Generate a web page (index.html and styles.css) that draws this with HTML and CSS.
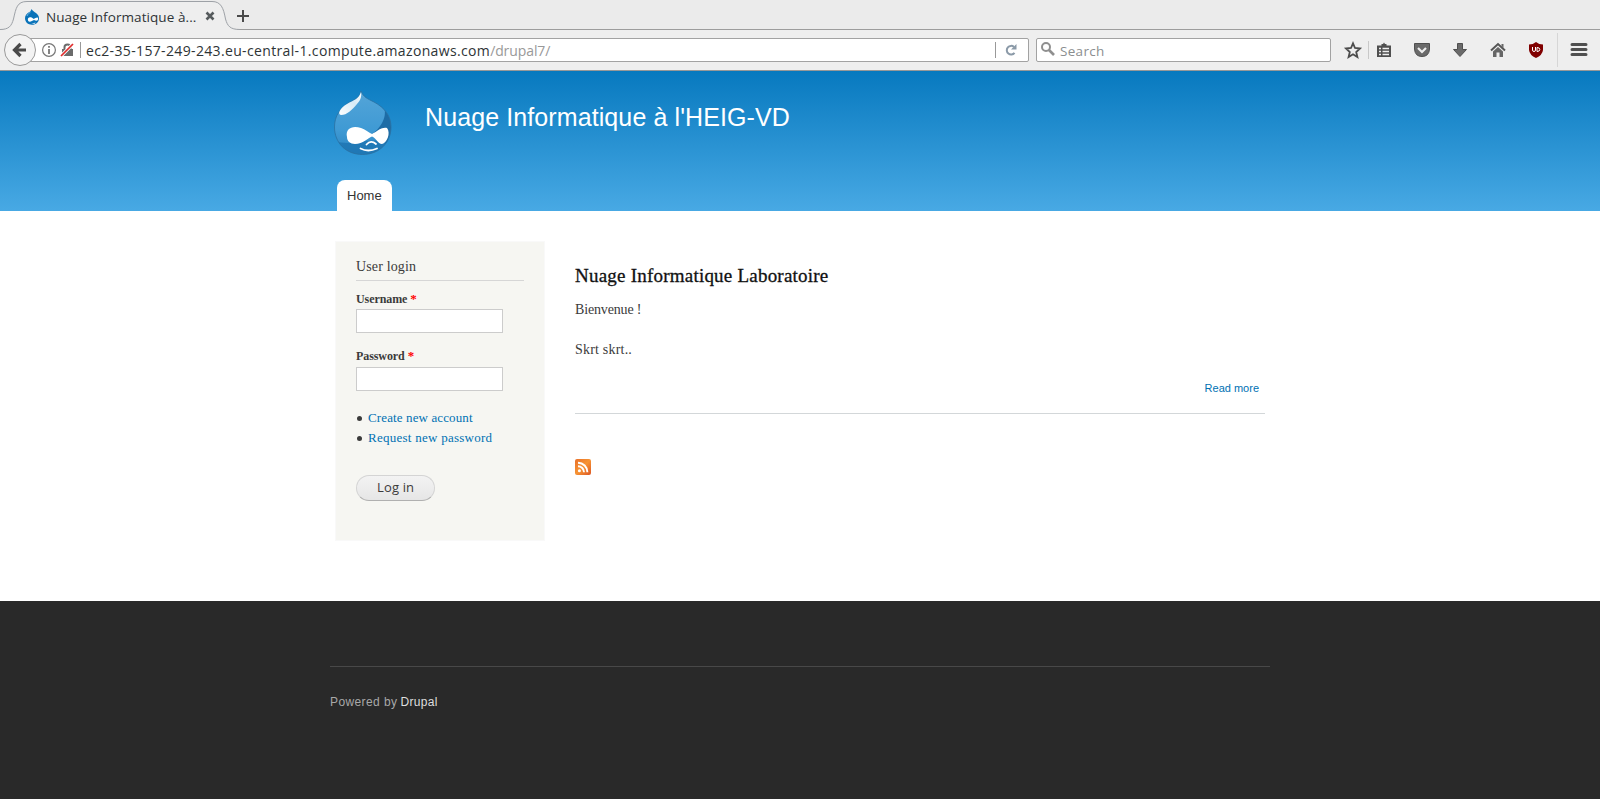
FILE: index.html
```
<!DOCTYPE html>
<html lang="fr">
<head>
<meta charset="utf-8">
<title>Nuage Informatique à l'HEIG-VD</title>
<link rel="stylesheet" href="styles.css">
</head>
<body>
<div class="tabstrip">
  <svg class="tab-shape" width="250" height="30" viewBox="0 0 250 30"><path d="M0 29.5C9 29.5 11.500 26 13.500 19C16 8 17 1.500 27 1.500H212C221 1.500 223.500 8 225.500 19C227.500 26 230 29.500 240 29.500V31H0Z" fill="#eeeeee"/><path d="M0 29.500C9 29.500 11.500 26 13.500 19C16 8 17 1.500 27 1.500H212C221 1.500 223.500 8 225.500 19C227.500 26 230 29.500 240 29.500" fill="none" stroke="#9da1a6"/></svg>
  <div class="tab">
    <svg class="favicon" width="16" height="16" viewBox="0 0 16 16"><path d="M7.500 0C8.500 2 10.500 2.800 12 4C14 5.500 15 7.200 15 9.200C15 13 12 15.800 8 15.800S1 13 1 9.300C1 6.500 2.800 4.700 4.500 3.600C6 2.700 7 1.800 7.500 0Z" fill="#0a73b9"/><path d="M4.200 11.900C2.800 8.800 5.500 7.600 8 8.700L9.800 10C11 9.400 13.200 7.700 14 9C14.500 11.500 12.800 12.500 10 11C8 12.200 5.500 13.500 4.200 11.900ZM6.500 13.700Q9 15 11.500 13.500L11 14.500Q9 15.500 6.500 13.700Z" fill="#fff"/><path d="M3 7C3.500 5 5.500 4 6.500 3" stroke="#72b7df" fill="none"/></svg>
    <span class="tab-title">Nuage Informatique à...</span>
    <svg class="tab-close" width="10" height="10" viewBox="0 0 10 10"><path d="M1.500 1.500L8.500 8.500M8.500 1.500L1.500 8.500" stroke="#555a5c" stroke-width="2.600"/></svg>
  </div>
  <svg class="newtab" width="12" height="12" viewBox="0 0 12 12"><path d="M6 0V12M0 6H12" stroke="#4a4a4a" stroke-width="2"/></svg>
</div>
<div class="toolbar">
  <div class="url">
    <svg width="34" height="16" viewBox="0 0 34 16"><circle cx="7" cy="8" r="6.400" fill="none" stroke="#777" stroke-width="1.200"/><path d="M7 7V12M7 4V5.700" stroke="#666" stroke-width="1.600"/><path d="M20 7H31V14H20Z" fill="#6b6b6b"/><path d="M22.500 7V5Q22.500 2.500 25.500 2.500T28.500 5V7" fill="none" stroke="#6b6b6b" stroke-width="2"/><path d="M19 14L31 2" stroke="#fff" stroke-width="3.200"/><path d="M19 14L31 2" stroke="#e02b2b" stroke-width="1.700"/></svg>
    <i class="sep"></i>
    <span class="addr">ec2-35-157-249-243.eu-central-1.compute.amazonaws.com</span><span class="path">/drupal7/</span>
    <i class="sep push"></i>
    <svg class="reload" width="12" height="12" viewBox="0 0 12 12"><path d="M9.500 8.800A4.300 4.300 0 1 1 9 3" fill="none" stroke="#8b9aa8" stroke-width="2"/><path d="M11.500 0V5.500H6Z" fill="#8b9aa8"/></svg>
  </div>
  <div class="search">
    <svg width="14" height="14" viewBox="0 0 14 14"><circle cx="5" cy="5" r="4" fill="none" stroke="#8f8f8f" stroke-width="2"/><path d="M8 8L13 13" stroke="#8f8f8f" stroke-width="2.600"/></svg>
    <span>Search</span>
  </div>
  <svg class="tools" width="260" height="40" viewBox="1340 30 260 40">
    <path d="M1353 43.300L1355 48L1360 48.500L1356.200 52L1357.400 57L1353 54.300L1348.600 57L1349.800 52L1346 48.500L1351 48Z" fill="none" stroke="#4c4c4c" stroke-width="1.800"/>
    <path d="M1368.500 41V59" stroke="#c8c8c8"/>
    <path d="M1377 45.500H1381.500V44H1383L1384 42.500L1385 44H1386.500V45.500H1391V57H1377Z" fill="#4f4f4f"/><path d="M1379 48.500H1381M1382.500 48.500H1389M1379 51.500H1381M1382.500 51.500H1389M1379 54.500H1381M1382.500 54.500H1389" stroke="#eee" stroke-width="1.600"/>
    <path d="M1414.500 43.500H1429.500V49Q1429 56.500 1422 56.500T1414.500 49Z" fill="#6a6a6a" stroke="#4f4f4f"/><path d="M1418 48L1422 52L1426 48" fill="none" stroke="#eee" stroke-width="2.200"/>
    <path d="M1457.500 43.500H1462.500V49.500H1466.500L1460 56.500L1453.500 49.500H1457.500Z" fill="#6a6a6a" stroke="#4f4f4f"/>
    <path d="M1491 50.500L1498 44L1505 50.500" fill="none" stroke="#555" stroke-width="2"/><path d="M1493 51.500L1498 47L1503 51.500V57H1499.500V52.500H1496.500V57H1493ZM1501.500 44H1503.500V48L1501.500 46Z" fill="#666"/>
    <path d="M1536 42Q1539 44.500 1543 44.500V50Q1542.500 55 1536 58Q1529.500 55 1529 50V44.500Q1533 44.500 1536 42Z" fill="#800000"/><path d="M1532.500 47V50Q1532.500 51.500 1534 51.500T1535.500 50V47M1537 47.500V51.500Q1539.800 51.500 1539.800 49.500T1537 47.500Z" fill="none" stroke="#fff"/>
    <path d="M1557.500 33V67" stroke="#d6d6d6"/>
    <path d="M1572 44.500H1586M1572 49.500H1586M1572 54.500H1586" stroke="#4f4f4f" stroke-width="3" stroke-linecap="round"/>
  </svg>
  <div class="back"><svg width="16" height="16" viewBox="0 0 16 16"><path d="M8.500 2L2.500 8L8.500 14M2.500 8H14" fill="none" stroke="#4a4a4a" stroke-width="3.200"/></svg></div>
</div>
<header class="header">
  <div class="brand">
    <svg class="logo" width="60" height="66" viewBox="0 0 60 66">
      <defs><linearGradient id="drop" x1="0" y1="0" x2="0" y2="1"><stop offset="0" stop-color="#55a5d8"/><stop offset=".6" stop-color="#3f9ad4"/><stop offset="1" stop-color="#2a83c1"/></linearGradient><linearGradient id="shine" x1="1" y1="0" x2="0" y2="1"><stop offset="0" stop-color="#fff"/><stop offset=".4" stop-color="#d8ebf6"/><stop offset="1" stop-color="#fff"/></linearGradient>
      <clipPath id="clip"><path d="M28 1C30 7 35 9 41 12C52 18 58 26 58 37C58 53 46 64.500 29.500 64.500S1.500 53 1.500 37C1.500 26 7 18 17 12C23 9 27 7 28 1Z"/></clipPath></defs>
      <g clip-path="url(#clip)"><path d="M0 0H60V66H0Z" fill="url(#drop)"/><path d="M51 17C55 29 45 41 37 45L58 57V15Z" fill="#1d6ca6"/><path d="M0 51Q15 55 28 51L58 50V66H0Z" fill="#1d74b1" opacity=".8"/></g>
      <path d="M28 1C30 7 35 9 41 12C52 18 58 26 58 37C58 53 46 64.500 29.500 64.500S1.500 53 1.500 37C1.500 26 7 18 17 12C23 9 27 7 28 1Z" fill="none" stroke="#2a6f9f" stroke-opacity=".75"/>
      <path d="M28 2C29 7 27 11 24 14C19 20 14 25 8 25C4 24 7 18 14 14C21 10 26 9 28 2Z" fill="url(#shine)"/>
      <path d="M14 47C12 38 20 35 28 38C32 39 36 43 39 44C44 42 47 37 54 38C58 43 54 53 49 54C45 54 43 48 39 46.500C35 48 30 54 22 54C17 54 14 51 14 47Z" fill="#fff"/>
      <path d="M33.500 54.500Q38 49.500 43 54M27.500 58.500Q35 62.500 44 58.500" fill="none" stroke="#fff" stroke-width="1.800" stroke-linecap="round"/>
    </svg>
    <span class="site-name">Nuage Informatique à l'HEIG-VD</span>
  </div>
  <nav><a class="home"><span>Home</span></a></nav>
</header>
<main class="main">
  <aside class="login">
    <h2><span>User login</span></h2>
    <label class="l-user">Username <b>*</b></label>
    <div class="field"></div>
    <label class="l-pass">Password <b>*</b></label>
    <div class="field"></div>
    <ul><li><a class="create">Create new account</a></li><li><a class="request">Request new password</a></li></ul>
    <div class="button"><span>Log in</span></div>
  </aside>
  <section class="content">
    <h1><span>Nuage Informatique Laboratoire</span></h1>
    <p><span class="p1">Bienvenue !</span></p>
    <p><span class="p2">Skrt skrt..</span></p>
    <div class="more"><a>Read more</a></div>
    <svg class="rss" width="16" height="16" viewBox="0 0 16 16"><defs><linearGradient id="feed" x1="0" y1="0" x2="1" y2="1"><stop offset="0" stop-color="#e8702a"/><stop offset=".5" stop-color="#f79434"/><stop offset="1" stop-color="#dc5623"/></linearGradient></defs><rect width="16" height="16" rx="2" fill="url(#feed)"/><circle cx="4.400" cy="11.700" r="1.500" fill="#fff"/><path d="M3 7.200A6 6 0 0 1 9 13.200M3 3.700A9.400 9.400 0 0 1 12.400 13.200" stroke="#fff" stroke-width="1.900" fill="none"/></svg>
  </section>
</main>
<footer class="footer"><div><span class="pow">Powered by</span><span class="dru">Drupal</span></div></footer>
</body>
</html>
```
FILE: styles.css
```
* { box-sizing: border-box; }
body { margin: 0; background: #fff; width: 1600px; height: 799px; overflow: hidden; font-family: "Liberation Serif", serif; color: #3b3b3b; display: flex; flex-direction: column; }
svg { display: block; flex: none; }
span, a, label { white-space: nowrap; }

.tabstrip { position: relative; height: 30px; background: #ebebeb; border-bottom: 1px solid #9c9c9c; display: flex; align-items: center; flex: none; }
.tab-shape { position: absolute; left: 0; top: 0; }
.tab { position: relative; display: flex; align-items: center; width: 237px; padding: 4px 0 0 24px; }
.tab-title { font: 13.5px/20px "Open Sans", sans-serif; color: #2e3436; margin-left: 6px; width: 154px; letter-spacing: 0.08px; }
.tab-close { margin: -2px 0 0 5px; }
.newtab { margin-top: 3px; }

.toolbar { position: relative; height: 41px; background: #eeeeee; border-bottom: 1px solid #989898; display: flex; flex: none; align-items: flex-start; padding: 8px 0 0 20px; }
.url { width: 1009px; height: 24px; background: #fff; border: 1px solid #a2a2a2; border-radius: 2px; display: flex; align-items: center; padding-left: 21px; font: 14px/22px "Open Sans", sans-serif; }
.sep { width: 1px; height: 16px; background: #999; margin: 0 5px 0 4px; }
.push { margin-left: auto; margin-right: 9px; }
.reload { margin-right: 11px; }
.addr, .path, .search span { padding-top: 2px; }
.addr { color: #2e3436; letter-spacing: 0.35px; }
.path { color: #999; letter-spacing: -0.1px; }
.search { width: 295px; height: 24px; margin-left: 7px; background: #fff; border: 1px solid #a2a2a2; border-radius: 2px; display: flex; align-items: center; padding-left: 4px; gap: 5px; font: 13.5px/22px "Open Sans", sans-serif; color: #8b8e8f; letter-spacing: 0.3px; }
.search svg { margin-top: -3px; }
.tools { margin: -8px 0 0 9px; }
.back { position: absolute; left: 4px; top: 4px; width: 32px; height: 32px; border: 1px solid #999; border-radius: 50%; background: #f3f3f3; display: flex; align-items: center; padding-left: 7px; }

.header { height: 140px; flex: none; background: linear-gradient(#0779bf, #48a9e4); padding: 19px 0 0 333px; font-family: "Liberation Sans", sans-serif; }
.brand { display: flex; height: 90px; }
.site-name { margin-left: 32px; font-size: 25px; line-height: 30px; padding-top: 12px; color: #fff; letter-spacing: 0.1px; }
.home { display: block; margin-left: 4px; width: 55px; height: 31px; border-radius: 8px 8px 0 0; background: #fff; color: #333; font-size: 13px; line-height: 31px; padding-left: 10px; }

.main { height: 390px; flex: none; display: flex; gap: 30px; padding: 30px 0 0 335px; }
.login { width: 210px; height: 300px; background: #f6f6f2; border: 1px solid #f9f9f9; padding: 15px 20px 0; display: flex; flex-direction: column; }
.login h2 { margin: 0 0 9px; font-size: 14px; font-weight: normal; line-height: 20px; height: 24px; border-bottom: 1px solid #d6d6d6; letter-spacing: 0.15px; }
.login label { font-size: 12px; line-height: 18px; font-weight: bold; height: 19px; letter-spacing: -0.08px; }
.login label b { color: #f00; font-size: 13px; line-height: 12px; }
.field { width: 147px; height: 24px; background: #fff; border: 1px solid #ccc; flex: none; }
.l-pass { margin-top: 14px; }
.field + .l-pass { margin-bottom: 1px; }
.login ul { list-style: none; margin: 17px 0 0; padding: 0; }
.login li { height: 20px; line-height: 20px; font-size: 13px; display: flex; align-items: center; gap: 7px; }
.login li::before { content: ""; width: 5px; height: 5px; border-radius: 50%; background: #3b3b3b; margin-left: 1px; margin-right: -1px; }
.login li a { color: #0071b3; }
.create { letter-spacing: 0.12px; }
.request { letter-spacing: 0.26px; }
.button { width: 79px; height: 26px; margin-top: 27px; border: 1px solid #d4d4d4; border-bottom-color: #b0b0b0; border-radius: 13px; background: linear-gradient(#f3f3f3, #e6e6e6); font: 13px/23px "Open Sans", sans-serif; padding-left: 20px; letter-spacing: 0.15px; }
.content { width: 690px; padding-top: 23px; }
.content h1 { margin: 0 0 12px; font-size: 19px; line-height: 24px; font-weight: normal; color: #111; -webkit-text-stroke: 0.3px #111; letter-spacing: 0.22px; }
.content p { margin: 0 0 20px; font-size: 14px; line-height: 20px; }
.p1 { letter-spacing: -0.15px; }
.p2 { letter-spacing: 0.2px; }
.more { height: 46px; border-bottom: 1px solid #d3d7d9; font: 11px/14px "Liberation Sans", sans-serif; text-align: right; padding: 13px 6px 0 0; color: #0071b3; margin-top: -12px; }
.rss { margin-top: 45px; }

.footer { flex: 1; background: #292929; padding: 65px 0 0 330px; font-family: "Liberation Sans", sans-serif; font-size: 12px; }
.footer div { width: 940px; border-top: 1px solid #484848; padding-top: 27px; line-height: 16px; display: flex; gap: 3px; color: #a8a8a8; }
.pow { letter-spacing: 0.4px; }
.dru { color: #dedede; letter-spacing: 0.35px; }
```
